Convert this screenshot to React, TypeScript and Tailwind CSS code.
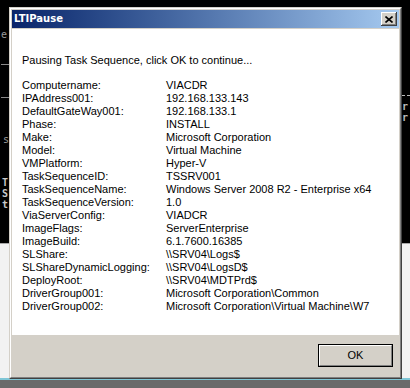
const rows: [string, string][] = [
  ["Computername:", "VIACDR"],
  ["IPAddress001:", "192.168.133.143"],
  ["DefaultGateWay001:", "192.168.133.1"],
  ["Phase:", "INSTALL"],
  ["Make:", "Microsoft Corporation"],
  ["Model:", "Virtual Machine"],
  ["VMPlatform:", "Hyper-V"],
  ["TaskSequenceID:", "TSSRV001"],
  ["TaskSequenceName:", "Windows Server 2008 R2 - Enterprise x64"],
  ["TaskSequenceVersion:", "1.0"],
  ["ViaServerConfig:", "VIADCR"],
  ["ImageFlags:", "ServerEnterprise"],
  ["ImageBuild:", "6.1.7600.16385"],
  ["SLShare:", "\\\\SRV04\\Logs$"],
  ["SLShareDynamicLogging:", "\\\\SRV04\\LogsD$"],
  ["DeployRoot:", "\\\\SRV04\\MDTPrd$"],
  ["DriverGroup001:", "Microsoft Corporation\\Common"],
  ["DriverGroup002:", "Microsoft Corporation\\Virtual Machine\\W7"],
];

function CloseButton() {
  return (
    <div className="border-b border-r border-[#404040] bg-[#d4d0c8]">
      <div className="flex h-[13px] w-[15px] items-center justify-center border-l border-t border-white shadow-[inset_-1px_-1px_0_#808080]">
        <svg width="8" height="7" viewBox="0 0 8 7">
          <path d="M0.5 0.5 L7.5 6.5 M7.5 0.5 L0.5 6.5" stroke="#000" strokeWidth="1.6" />
        </svg>
      </div>
    </div>
  );
}

// console window behind the dialog, only its edges show
function Desktop() {
  return (
    <div className="flex h-full flex-col font-['DejaVu_Sans_Mono',monospace] text-[10px] leading-[11px]">
      <div className="flex h-[243px] justify-between bg-black">
        <div className="flex w-[9px] flex-col pl-[1px] pt-[29px] text-[#9a9a9a]">
          <span>e</span>
          <div className="mt-[24px] h-px w-[8px] bg-[#8a8a8a]" />
          <div className="mt-[32px] h-px w-[8px] bg-[#8a8a8a]" />
          <span className="mt-[36px] pl-[2px]">s</span>
          <div className="mt-[32px] flex flex-col pl-[1px] font-bold text-[#c8c8c8]">
            <span>T</span>
            <span>S</span>
            <span>t</span>
          </div>
        </div>
        <div className="flex w-[8px] flex-col pt-[95px] font-bold text-[#bbbbbb]">
          <div className="h-px border-t border-dashed border-[#bbbbbb]" />
          <span className="mt-[5px]">r</span>
          <span>r</span>
        </div>
      </div>
      <div className="flex-1 border-t border-[#a8a8a8] bg-[#f2f2f2]" />
      <div className="h-[2px] bg-[#7fc6d6]" />
      <div className="h-[8px] bg-[#6a6a6a]" />
    </div>
  );
}

export default function App() {
  return (
    <div className="relative h-[388px] w-[410px] overflow-hidden bg-black font-['Liberation_Sans',Arial,sans-serif]">
      <Desktop />

      <div className="absolute left-[9px] top-[7px] h-[372px] w-[393px] border-b border-l border-r border-t border-b-[#404040] border-l-[#d4d0c8] border-r-[#404040] border-t-[#d4d0c8]">
        <div className="h-full border-b border-l border-r border-t border-b-[#808080] border-l-white border-r-[#808080] border-t-white bg-[#d4d0c8] p-px">
          <div className="flex h-full flex-col">
            <div className="flex h-[18px] items-center justify-between bg-gradient-to-r from-[#0a246a] to-[#a6caf0] pl-[2px] pr-[2px]">
              <span className="font-['DejaVu_Sans',Verdana,sans-serif] text-[10px] font-bold leading-[18px] text-white">
                LTIPause
              </span>
              <CloseButton />
            </div>

            <div className="mt-px h-[306px] bg-white pl-[10px] pt-[25px] text-[11px] leading-[13px] text-black">
              <p>Pausing Task Sequence, click OK to continue...</p>
              <div className="mt-[12px] grid grid-cols-[144px_1fr]">
                {rows.map(([label, value]) => (
                  <div key={label} className="contents">
                    <span>{label}</span>
                    <span className="whitespace-nowrap">{value}</span>
                  </div>
                ))}
              </div>
            </div>

            <div className="flex flex-1 items-start justify-end pr-[6px] pt-[9px]">
              <button className="h-[23px] w-[75px] border border-black bg-[#d4d0c8] p-0">
                <div className="flex h-full w-full items-center justify-center border-b border-l border-r border-t border-b-[#808080] border-l-white border-r-[#808080] border-t-white text-[11px] text-black">
                  OK
                </div>
              </button>
            </div>
          </div>
        </div>
      </div>
    </div>
  );
}
